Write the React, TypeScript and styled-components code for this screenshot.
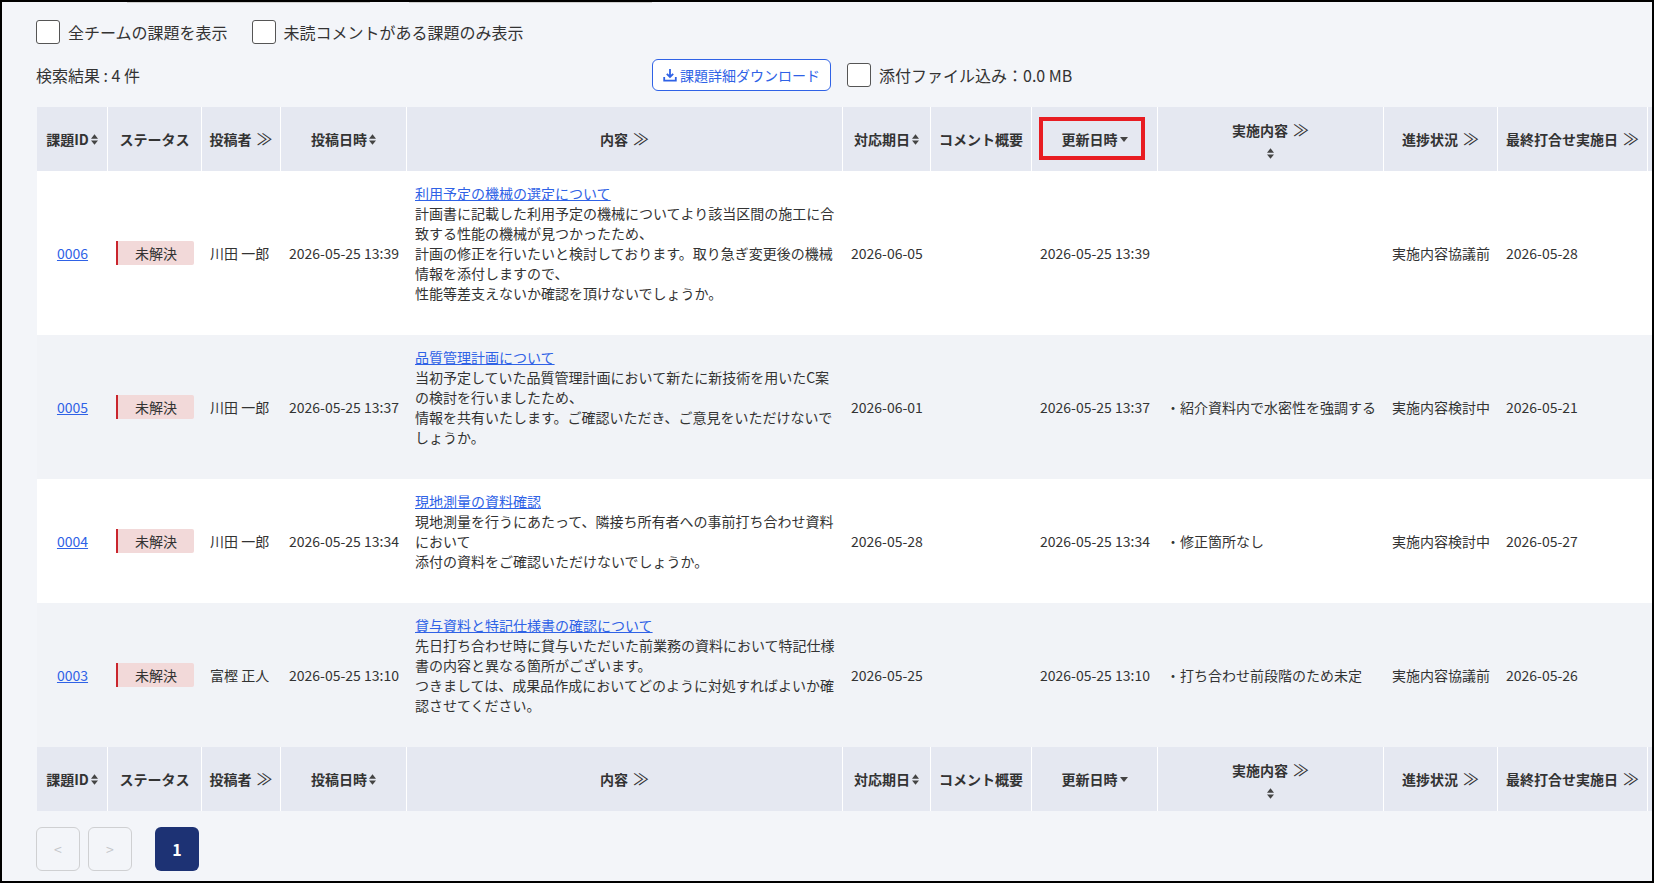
import styled, { createGlobalStyle } from "styled-components";

const GlobalStyle = createGlobalStyle`
  html, body {
    margin: 0;
    padding: 0;
    background: #ffffff;
  }
  body {
    font-family: "Noto Sans CJK JP", "Noto Sans", sans-serif;
    font-size: 14px;
    color: #333333;
  }
`;

interface Column {
  key: string;
  label: string;
  width: number;
  icon?: "sort" | "filter" | "desc";
  stacked?: boolean;
  highlight?: boolean;
}

interface Issue {
  id: string;
  author: string;
  posted: string;
  title: string;
  body: string[];
  due: string;
  updated: string;
  work: string;
  progress: string;
  meeting: string;
}

const columns: Column[] = [
  { key: "id", label: "課題ID", width: 71, icon: "sort" },
  { key: "status", label: "ステータス", width: 94 },
  { key: "author", label: "投稿者", width: 79, icon: "filter" },
  { key: "posted", label: "投稿日時", width: 126, icon: "sort" },
  { key: "body", label: "内容", width: 436, icon: "filter" },
  { key: "due", label: "対応期日", width: 88, icon: "sort" },
  { key: "comment", label: "コメント概要", width: 101 },
  { key: "updated", label: "更新日時", width: 126, icon: "desc", highlight: true },
  { key: "work", label: "実施内容", width: 226, icon: "filter", stacked: true },
  { key: "progress", label: "進捗状況", width: 114, icon: "filter" },
  { key: "meeting", label: "最終打合せ実施日", width: 150, icon: "filter" },
  { key: "end", label: "", width: 4 },
];

const issues: Issue[] = [
  {
    id: "0006",
    author: "川田 一郎",
    posted: "2026-05-25 13:39",
    title: "利用予定の機械の選定について",
    body: [
      "計画書に記載した利用予定の機械についてより該当区間の施工に合致する性能の機械が見つかったため、",
      "計画の修正を行いたいと検討しております。取り急ぎ変更後の機械情報を添付しますので、",
      "性能等差支えないか確認を頂けないでしょうか。",
    ],
    due: "2026-06-05",
    updated: "2026-05-25 13:39",
    work: "",
    progress: "実施内容協議前",
    meeting: "2026-05-28",
  },
  {
    id: "0005",
    author: "川田 一郎",
    posted: "2026-05-25 13:37",
    title: "品質管理計画について",
    body: [
      "当初予定していた品質管理計画において新たに新技術を用いたC案の検討を行いましたため、",
      "情報を共有いたします。ご確認いただき、ご意見をいただけないでしょうか。",
    ],
    due: "2026-06-01",
    updated: "2026-05-25 13:37",
    work: "・紹介資料内で水密性を強調する",
    progress: "実施内容検討中",
    meeting: "2026-05-21",
  },
  {
    id: "0004",
    author: "川田 一郎",
    posted: "2026-05-25 13:34",
    title: "現地測量の資料確認",
    body: [
      "現地測量を行うにあたって、隣接ち所有者への事前打ち合わせ資料において",
      "添付の資料をご確認いただけないでしょうか。",
    ],
    due: "2026-05-28",
    updated: "2026-05-25 13:34",
    work: "・修正箇所なし",
    progress: "実施内容検討中",
    meeting: "2026-05-27",
  },
  {
    id: "0003",
    author: "富樫 正人",
    posted: "2026-05-25 13:10",
    title: "貸与資料と特記仕様書の確認について",
    body: [
      "先日打ち合わせ時に貸与いただいた前業務の資料において特記仕様書の内容と異なる箇所がございます。",
      "つきましては、成果品作成においてどのように対処すればよいか確認させてください。",
    ],
    due: "2026-05-25",
    updated: "2026-05-25 13:10",
    work: "・打ち合わせ前段階のため未定",
    progress: "実施内容協議前",
    meeting: "2026-05-26",
  },
];

const SortIcon = () => (
  <svg width="7" height="11" viewBox="0 0 8 12">
    <path d="M4 0 L8 5 H0 Z M0 7 H8 L4 12 Z" fill="#444444" />
  </svg>
);

const DescIcon = () => (
  <svg width="8" height="5" viewBox="0 0 8 5">
    <path d="M0 0 H8 L4 5 Z" fill="#444444" />
  </svg>
);

const DownloadIcon = () => (
  <svg width="14" height="14" viewBox="0 0 14 14" fill="none" stroke="#2f62e6" strokeWidth="1.8">
    <path d="M7 1 V8.6 M3.8 5.8 L7 9 L10.2 5.8 M1.2 9 V12.6 H12.8 V9" />
  </svg>
);

const HeaderRow = ({ showMarker }: { showMarker?: boolean }) => (
  <tr>
    {columns.map((col) => (
      <HeadCell key={col.key} $highlight={showMarker && col.highlight}>
        {col.label && (
          <HeadLabel $stacked={col.stacked}>
            <span>
              {col.label}
              {col.icon === "filter" && <FilterMark>≫</FilterMark>}
            </span>
            {col.icon === "sort" && <SortIcon />}
            {col.icon === "desc" && <DescIcon />}
            {col.stacked && <SortIcon />}
          </HeadLabel>
        )}
      </HeadCell>
    ))}
  </tr>
);

export default function App() {
  return (
    <>
      <GlobalStyle />
      <Frame>
        <TopEdge>
          <EdgeStrip />
          <EdgeStrip />
        </TopEdge>
        <Filters>
          <CheckLabel>
            <CheckBox />
            全チームの課題を表示
          </CheckLabel>
          <CheckLabel>
            <CheckBox />
            未読コメントがある課題のみ表示
          </CheckLabel>
        </Filters>
        <ResultBar>
          <ResultCount>検索結果 : 4 件</ResultCount>
          <DownloadButton>
            <DownloadIcon />
            課題詳細ダウンロード
          </DownloadButton>
          <CheckLabel>
            <CheckBox />
            添付ファイル込み：0.0 MB
          </CheckLabel>
        </ResultBar>
        <Table>
          <colgroup>
            {columns.map((col) => (
              <col key={col.key} width={col.width} />
            ))}
          </colgroup>
          <thead>
            <HeaderRow showMarker />
          </thead>
          <tbody>
            {issues.map((issue) => (
              <BodyRow key={issue.id}>
                <IdCell>
                  <IssueLink href="#">{issue.id}</IssueLink>
                </IdCell>
                <StatusCell>
                  <StatusBadge>未解決</StatusBadge>
                </StatusCell>
                <Cell>{issue.author}</Cell>
                <Cell>{issue.posted}</Cell>
                <ContentCell>
                  <IssueLink href="#">{issue.title}</IssueLink>
                  {issue.body.map((line) => (
                    <div key={line}>{line}</div>
                  ))}
                </ContentCell>
                <Cell>{issue.due}</Cell>
                <Cell />
                <Cell>{issue.updated}</Cell>
                <Cell>{issue.work}</Cell>
                <Cell>{issue.progress}</Cell>
                <Cell>{issue.meeting}</Cell>
                <Cell />
              </BodyRow>
            ))}
          </tbody>
          <tfoot>
            <HeaderRow />
          </tfoot>
        </Table>
        <Pagination>
          <PagerGroup>
            <PagerButton>&lt;</PagerButton>
            <PagerButton>&gt;</PagerButton>
          </PagerGroup>
          <PageCurrent>1</PageCurrent>
        </Pagination>
      </Frame>
    </>
  );
}

const Frame = styled.div`
  box-sizing: border-box;
  width: 1654px;
  height: 883px;
  background: #f3f5f9;
  border: 2px solid #000000;
  padding: 0 0 0 34px;
  overflow: hidden;
`;

const TopEdge = styled.div`
  display: flex;
  gap: 39px;
  height: 1px;
  padding-left: 91px;
`;

const EdgeStrip = styled.div`
  width: 243px;
  height: 1px;
  background: #d0d0d0;
`;

const Filters = styled.div`
  display: flex;
  gap: 24px;
  padding-top: 17px;
  height: 24px;
`;

const CheckLabel = styled.label`
  display: flex;
  align-items: center;
  gap: 8px;
  font-size: 16px;
  color: #333333;
`;

const CheckBox = styled.span`
  box-sizing: border-box;
  width: 24px;
  height: 24px;
  background: #ffffff;
  border: 1px solid #555555;
  border-radius: 3px;
`;

const ResultBar = styled.div`
  display: flex;
  align-items: center;
  height: 34px;
  margin-top: 14px;
  margin-bottom: 15px;
`;

const ResultCount = styled.div`
  width: 616px;
  font-size: 16px;
`;

const DownloadButton = styled.button`
  box-sizing: border-box;
  display: flex;
  align-items: center;
  justify-content: center;
  gap: 3px;
  width: 179px;
  height: 32px;
  margin-right: 16px;
  padding: 0;
  background: #ffffff;
  border: 1px solid #2f62e6;
  border-radius: 6px;
  color: #2f62e6;
  font-family: inherit;
  font-size: 14px;
`;

const Table = styled.table`
  table-layout: fixed;
  width: 1615px;
  margin-left: 1px;
  border-collapse: separate;
  border-spacing: 0;
`;

const HeadCell = styled.th<{ $highlight?: boolean }>`
  position: relative;
  box-sizing: border-box;
  height: 64px;
  padding: 0;
  background: #e5e8f1;
  border-right: 1px solid #ffffff;
  font-size: 14px;
  font-weight: 700;
  color: #333333;
  &:last-child {
    border-right: none;
  }
  ${(props) =>
    props.$highlight &&
    `
    &::after {
      content: "";
      position: absolute;
      top: 10px;
      left: 7px;
      box-sizing: border-box;
      width: 106px;
      height: 43px;
      border: 4px solid #e81c22;
    }
  `}
`;

const HeadLabel = styled.div<{ $stacked?: boolean }>`
  display: flex;
  flex-direction: ${(props) => (props.$stacked ? "column" : "row")};
  align-items: center;
  justify-content: center;
  gap: ${(props) => (props.$stacked ? "8px" : "2px")};
  white-space: nowrap;
`;

const FilterMark = styled.span`
  margin-left: 5px;
  font-size: 16px;
  line-height: 1;
  font-weight: 400;
  color: #333333;
`;

const BodyRow = styled.tr`
  background: #ffffff;
  &:nth-child(even) {
    background: #f1f3f7;
  }
`;

const Cell = styled.td`
  padding: 0 8px;
  font-size: 14px;
  line-height: 20px;
  white-space: nowrap;
  color: #333333;
`;

const IdCell = styled(Cell)`
  text-align: center;
`;

const StatusCell = styled(Cell)`
  padding: 0;
`;

const ContentCell = styled(Cell)`
  padding: 12px 8px 32px 8px;
  white-space: normal;
`;

const IssueLink = styled.a`
  color: #2f62e6;
  text-decoration: underline;
`;

const StatusBadge = styled.div`
  box-sizing: border-box;
  width: 78px;
  height: 24px;
  margin-left: 8px;
  line-height: 24px;
  text-align: center;
  background: #f2d9d9;
  border-left: 2px solid #c9252d;
  border-radius: 0 2px 2px 0;
`;

const Pagination = styled.div`
  display: flex;
  align-items: center;
  gap: 23px;
  margin-top: 16px;
`;

const PagerGroup = styled.div`
  display: flex;
  gap: 8px;
`;

const PagerButton = styled.div`
  box-sizing: border-box;
  display: flex;
  align-items: center;
  justify-content: center;
  width: 44px;
  height: 44px;
  border: 1px solid #cfd0d2;
  border-radius: 6px;
  color: #c4c6c9;
  font-size: 14px;
`;

const PageCurrent = styled.div`
  display: flex;
  align-items: center;
  justify-content: center;
  width: 44px;
  height: 44px;
  background: #1d3274;
  border-radius: 6px;
  color: #ffffff;
  font-size: 16px;
  font-weight: 700;
`;
